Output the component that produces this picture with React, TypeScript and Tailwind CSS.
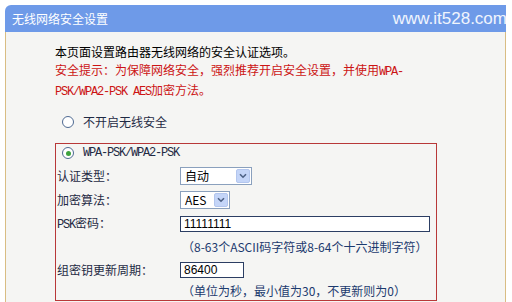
import React from 'react';

const cjk = "font-['Noto_Sans_CJK_SC','Noto_Sans',sans-serif]";
const mono = "font-['Liberation_Mono','Noto_Sans_CJK_SC',monospace] tracking-[-1.2px]";

function Radio({ checked }: { checked?: boolean }) {
  return (
    <span className="flex h-[12px] w-[12px] items-center justify-center rounded-full border border-[#4f6a92] bg-white">
      {checked && <span className="h-[5px] w-[5px] rounded-full bg-[#3ea23e]" />}
    </span>
  );
}

function Select({ value, width }: { value: string; width: string }) {
  return (
    <div className={`flex h-[18px] ${width} items-center justify-between border border-[#8aa0bd] bg-white pl-[4px] pr-[1px]`}>
      <span className="text-[12px] leading-none text-black">{value}</span>
      <span className="flex h-[14px] w-[14px] items-center justify-center rounded-[2px] border border-[#b3c6ee] bg-[#c4d5f8]">
        <svg width="8" height="6" viewBox="0 0 8 6">
          <path d="M1 1.2 L4 4.2 L7 1.2" fill="none" stroke="#4d6185" strokeWidth="1.6" />
        </svg>
      </span>
    </div>
  );
}

function Input({ value, width }: { value: string; width: string }) {
  return (
    <div className={`flex h-[16px] ${width} items-center border border-[#2c3e63] bg-white pl-[3px]`}>
      <span className="font-['Liberation_Sans',sans-serif] text-[12px] leading-none text-black">{value}</span>
    </div>
  );
}

function Row({ label, children }: { label: React.ReactNode; children: React.ReactNode }) {
  return (
    <div className="flex h-[24px] items-center">
      <div className="w-[124px] pl-[1px] text-[12px] text-[#1f2a44]">{label}</div>
      {children}
    </div>
  );
}

export default function App() {
  return (
    <div className={`h-[302px] w-[512px] overflow-hidden bg-white pt-[5px] ${cjk}`}>
      <div className="relative ml-[5px] w-[501px]">
        {/* Header */}
        <div className="flex h-[27px] items-center rounded-tl-[6px] bg-[#6e9ae8] pl-[7px] text-[12px] text-white">
          无线网络安全设置
        </div>
        <span className="absolute right-[-1px] top-[2px] font-['Liberation_Sans',sans-serif] text-[17px] leading-[24px] text-white/90">
          www.it528.com
        </span>

        {/* Body */}
        <div className="h-[270px] border-l border-r border-[#d9bd83] bg-[#f5f5f3] pl-[49px] pt-[11px]">
          <div className="text-[12px] leading-[18px]">
            <p className="text-black">本页面设置路由器无线网络的安全认证选项。</p>
            <p className="text-[#cc1414]">
              安全提示：为保障网络安全，强烈推荐开启安全设置，并使用<span className={mono}>WPA-</span>
            </p>
            <p className="text-[#cc1414]">
              <span className={mono}>PSK/WPA2-PSK AES</span>加密方法。
            </p>
          </div>

          <div className="mt-[12px] flex h-[18px] items-center gap-[9px] pl-[7px] text-[12px] text-[#1f2a44]">
            <Radio />
            <span>不开启无线安全</span>
          </div>

          <div className="mt-[12px] h-[158px] w-[382px] border border-[#b83838]">
            <div className="flex h-[18px] items-center gap-[9px] pl-[6px] text-[12px] text-[#1f2a44]">
              <Radio checked />
              <span className={mono}>WPA-PSK/WPA2-PSK</span>
            </div>
            <div className="mt-[2px]">
              <Row label="认证类型：">
                <Select value="自动" width="w-[72px]" />
              </Row>
              <Row label="加密算法：">
                <Select value="AES" width="w-[50px]" />
              </Row>
              <Row label={<><span className={mono}>PSK</span>密码：</>}>
                <Input value="11111111" width="w-[250px]" />
              </Row>
              <div className="flex h-[22px] items-center pl-[126px] text-[12px] text-[#1c3a6e]">
                （8-63个ASCII码字符或8-64个十六进制字符）
              </div>
              <Row label="组密钥更新周期：">
                <Input value="86400" width="w-[64px]" />
              </Row>
              <div className="flex h-[18px] items-center pl-[126px] text-[12px] text-[#1c3a6e]">
                （单位为秒，最小值为30，不更新则为0）
              </div>
            </div>
          </div>
        </div>
      </div>
    </div>
  );
}
